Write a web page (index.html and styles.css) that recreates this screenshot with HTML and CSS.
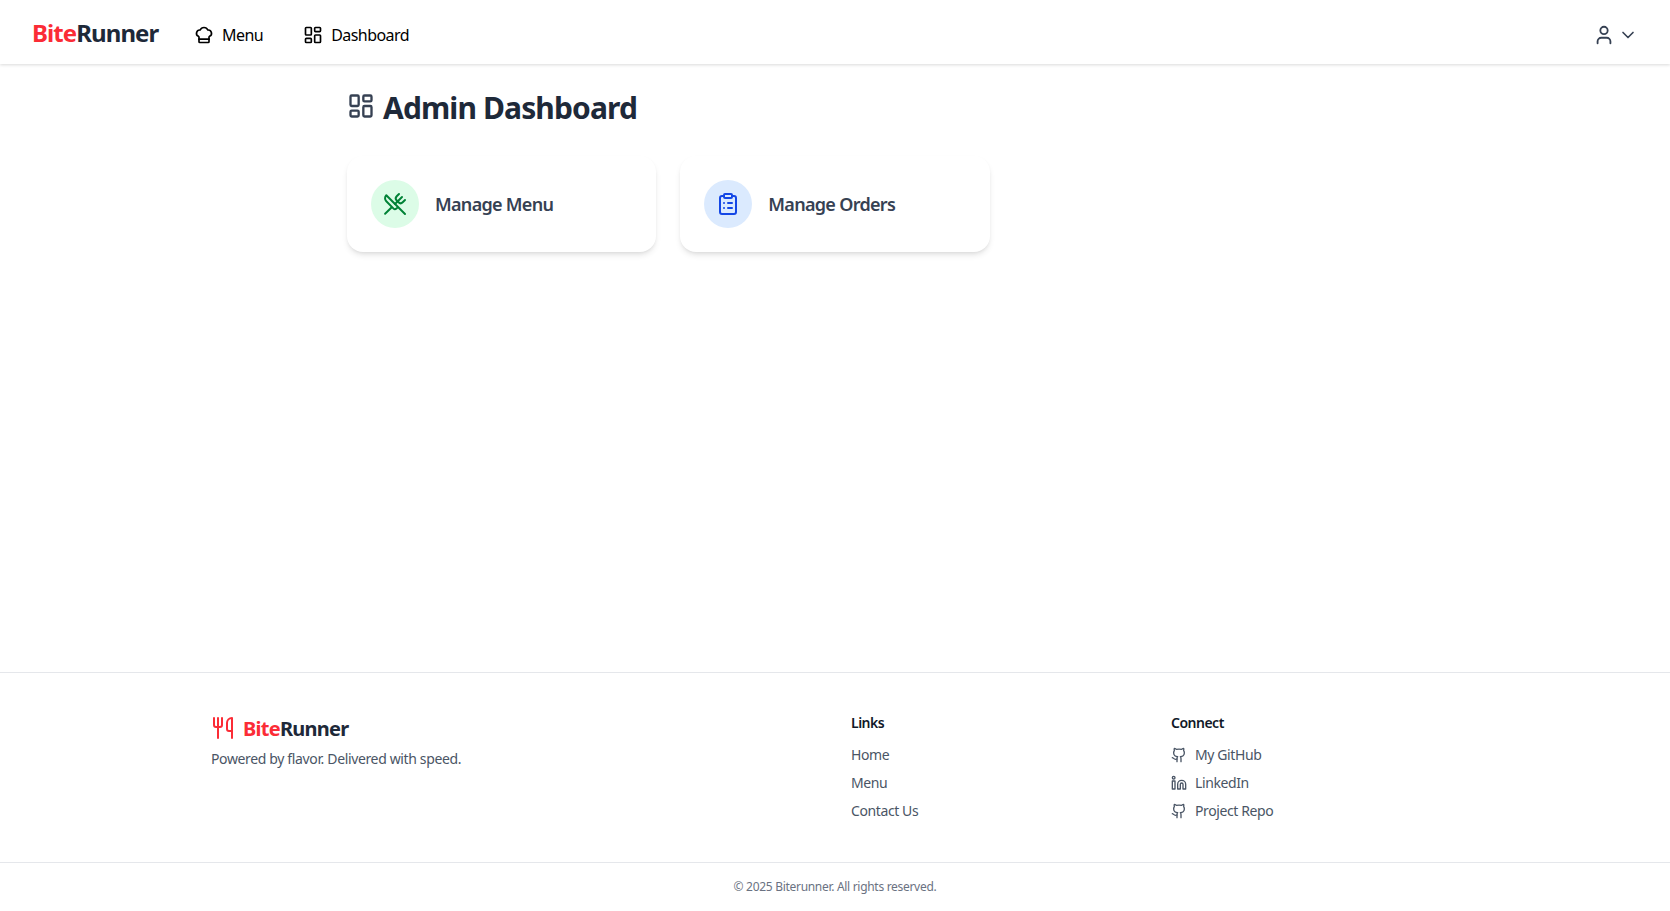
FILE: index.html
```html
<!DOCTYPE html>
<html lang="en">
<head>
    <meta charset="UTF-8">
    <meta name="viewport" content="width=device-width, initial-scale=1.0">
    <title>BiteRunner Admin Dashboard</title>
    <link rel="stylesheet" href="styles.css">
</head>
<body>
    <header class="navbar">
        <div class="nav-left">
            <a class="brand" href="#"><span class="red">Bite</span>Runner</a>
            <a class="nav-link" href="#">
                <svg class="icon nav-icon" viewBox="0 0 24 24"><path d="M17 21a1 1 0 0 0 1-1v-5.35c0-.457.316-.844.727-1.041a4 4 0 0 0-2.134-7.589 5 5 0 0 0-9.186 0 4 4 0 0 0-2.134 7.588c.411.198.727.585.727 1.041V20a1 1 0 0 0 1 1Z"/><path d="M6 17h12"/></svg>
                Menu
            </a>
            <a class="nav-link" href="#">
                <svg class="icon nav-icon" viewBox="0 0 24 24"><rect x="3" y="3" width="7" height="9" rx="1"/><rect x="14" y="3" width="7" height="5" rx="1"/><rect x="14" y="12" width="7" height="9" rx="1"/><rect x="3" y="16" width="7" height="5" rx="1"/></svg>
                Dashboard
            </a>
        </div>
        <div class="user-menu">
            <svg class="icon user-icon" viewBox="0 0 24 24"><path d="M19 21v-2a4 4 0 0 0-4-4H9a4 4 0 0 0-4 4v2"/><circle cx="12" cy="7" r="4"/></svg>
            <svg class="icon chevron" viewBox="0 0 24 24"><path d="m6 9 6 6 6-6"/></svg>
        </div>
    </header>

    <main class="content">
        <h1 class="page-title">
            <svg class="icon title-icon" viewBox="0 0 24 24"><rect x="3" y="3" width="7" height="9" rx="1"/><rect x="14" y="3" width="7" height="5" rx="1"/><rect x="14" y="12" width="7" height="9" rx="1"/><rect x="3" y="16" width="7" height="5" rx="1"/></svg>
            <span class="title-text">Admin Dashboard</span>
        </h1>
        <div class="cards">
            <a class="card" href="#">
                <span class="card-icon green">
                    <svg class="icon" viewBox="0 0 24 24"><path d="m16 2-2.3 2.3a3 3 0 0 0 0 4.2l1.8 1.8a3 3 0 0 0 4.2 0L22 8"/><path d="M15 15 3.3 3.3a4.2 4.2 0 0 0 0 6l7.3 7.3c.7.7 2 .7 2.8 0L15 15Zm0 0 7 7"/><path d="m2.1 21.8 6.4-6.3"/><path d="m19 5-7 7"/></svg>
                </span>
                Manage Menu
            </a>
            <a class="card" href="#">
                <span class="card-icon blue">
                    <svg class="icon" viewBox="0 0 24 24"><rect x="8" y="2" width="8" height="4" rx="1"/><path d="M16 4h2a2 2 0 0 1 2 2v14a2 2 0 0 1-2 2H6a2 2 0 0 1-2-2V6a2 2 0 0 1 2-2h2"/><path d="M12 11h4"/><path d="M12 16h4"/><path d="M8 11h.01"/><path d="M8 16h.01"/></svg>
                </span>
                Manage Orders
            </a>
        </div>
    </main>

    <footer class="footer">
        <div class="footer-grid">
            <div class="footer-about">
                <div class="footer-brand">
                    <svg class="icon footer-logo" viewBox="0 0 24 24"><path d="M3 2v7c0 1.1.9 2 2 2h4a2 2 0 0 0 2-2V2"/><path d="M7 2v20"/><path d="M21 15V2a5 5 0 0 0-5 5v6c0 1.1.9 2 2 2h3Zm0 0v7"/></svg>
                    <span class="footer-name"><span class="red">Bite</span>Runner</span>
                </div>
                <p class="tagline">Powered by flavor. Delivered with speed.</p>
            </div>
            <div>
                <h3 class="footer-heading">Links</h3>
                <ul class="footer-list">
                    <li><a href="#">Home</a></li>
                    <li><a href="#">Menu</a></li>
                    <li><a href="#">Contact Us</a></li>
                </ul>
            </div>
            <div>
                <h3 class="footer-heading">Connect</h3>
                <ul class="footer-list">
                    <li><a href="#"><svg class="icon social" viewBox="0 0 24 24"><path d="M15 22v-4a4.8 4.8 0 0 0-1-3.5c3 0 6-2 6-5.5.08-1.25-.27-2.48-1-3.5.28-1.15.28-2.35 0-3.5 0 0-1 0-3 1.5-2.64-.5-5.36-.5-8 0C6 2 5 2 5 2c-.3 1.15-.3 2.35 0 3.5A5.403 5.403 0 0 0 4 9c0 3.5 3 5.5 6 5.5-.39.49-.68 1.05-.85 1.65-.17.6-.22 1.23-.15 1.85v4"/><path d="M9 18c-4.51 2-5-2-7-2"/></svg>My GitHub</a></li>
                    <li><a href="#"><svg class="icon social" viewBox="0 0 24 24"><path d="M16 8a6 6 0 0 1 6 6v7h-4v-7a2 2 0 0 0-2-2 2 2 0 0 0-2 2v7h-4v-7a6 6 0 0 1 6-6z"/><rect x="2" y="9" width="4" height="12"/><circle cx="4" cy="4" r="2"/></svg>LinkedIn</a></li>
                    <li><a href="#"><svg class="icon social" viewBox="0 0 24 24"><path d="M15 22v-4a4.8 4.8 0 0 0-1-3.5c3 0 6-2 6-5.5.08-1.25-.27-2.48-1-3.5.28-1.15.28-2.35 0-3.5 0 0-1 0-3 1.5-2.64-.5-5.36-.5-8 0C6 2 5 2 5 2c-.3 1.15-.3 2.35 0 3.5A5.403 5.403 0 0 0 4 9c0 3.5 3 5.5 6 5.5-.39.49-.68 1.05-.85 1.65-.17.6-.22 1.23-.15 1.85v4"/><path d="M9 18c-4.51 2-5-2-7-2"/></svg>Project Repo</a></li>
                </ul>
            </div>
        </div>
        <div class="copyright">© 2025 Biterunner. All rights reserved.</div>
    </footer>
</body>
</html>
```
FILE: styles.css
```css
* {
    box-sizing: border-box;
}
html, body {
    margin: 0;
    height: 100%;
}
body {
    display: flex;
    flex-direction: column;
    min-height: 911px;
    background-color: #fff;
    color: #1e2939;
    font-family: "Noto Sans", "Open Sans", Arial, sans-serif;
}
a {
    color: inherit;
    text-decoration: none;
}
.icon {
    display: block;
    flex: none;
    width: 24px;
    height: 24px;
    fill: none;
    stroke: currentColor;
    stroke-width: 2;
    stroke-linecap: round;
    stroke-linejoin: round;
}
.red {
    color: #fb2c36;
}

/* top bar */
.navbar {
    display: flex;
    align-items: center;
    justify-content: space-between;
    height: 64px;
    padding: 0 32px;
    background: #fff;
    box-shadow: 0 1px 3px rgba(0, 0, 0, 0.15);
}
.nav-left {
    display: flex;
    align-items: center;
}
.brand {
    width: 146px;
    font-size: 24px;
    font-weight: 700;
    letter-spacing: -0.92px;
    white-space: nowrap;
}
.nav-link {
    display: flex;
    align-items: center;
    gap: 8px;
    padding: 14px 16px 8px;
    margin-right: 8px;
    color: #000;
    font-size: 16px;
    letter-spacing: -0.55px;
}
.nav-icon {
    width: 20px;
    height: 20px;
}
.user-menu {
    display: flex;
    align-items: center;
    gap: 3px;
    margin-top: 6px;
    color: #364153;
}
.user-icon {
    width: 22px;
    height: 22px;
}
.chevron {
    width: 20px;
    height: 20px;
}

/* main */
.content {
    flex: 1;
    width: 1024px;
    margin: 0 auto;
    padding: 26px 24px 24px;
}
.page-title {
    display: flex;
    align-items: center;
    gap: 8px;
    margin: 0 0 30px;
    font-size: 30px;
    line-height: 36px;
    font-weight: 700;
}
.title-text {
    letter-spacing: -0.88px;
}
.title-icon {
    width: 28px;
    height: 28px;
    margin-top: -5px;
    color: #364153;
}
.cards {
    display: grid;
    grid-template-columns: repeat(3, 1fr);
    gap: 24px;
}
.card {
    display: flex;
    align-items: center;
    gap: 16px;
    padding: 24px;
    border-radius: 16px;
    background: #fff;
    color: #364153;
    font-size: 18px;
    font-weight: 600;
    letter-spacing: -0.7px;
    box-shadow: 0 4px 6px -1px rgba(0, 0, 0, 0.1), 0 2px 4px -2px rgba(0, 0, 0, 0.1);
}
.card-icon {
    display: flex;
    align-items: center;
    justify-content: center;
    width: 48px;
    height: 48px;
    border-radius: 50%;
}
.green {
    background: #dcfce7;
    color: #008236;
}
.blue {
    background: #dbeafe;
    color: #1447e6;
}

/* footer */
.footer {
    border-top: 1px solid #e5e7eb;
}
.footer-grid {
    display: grid;
    grid-template-columns: repeat(4, 1fr);
    gap: 32px;
    width: 1280px;
    margin: 0 auto;
    padding: 40px 16px 41px;
}
.footer-about {
    grid-column: span 2;
}
.footer-brand {
    display: flex;
    align-items: center;
    gap: 8px;
    font-size: 20px;
    line-height: 28px;
    font-weight: 700;
}
.footer-name {
    margin-top: 2px;
    letter-spacing: -0.74px;
}
.footer-logo {
    color: #fb2c36;
}
.tagline {
    margin: 6px 0 0;
    color: #4a5565;
    font-size: 14px;
    line-height: 20px;
    letter-spacing: -0.36px;
}
.footer-heading {
    margin: 0 0 12px;
    color: #101828;
    font-size: 14px;
    line-height: 20px;
    font-weight: 600;
    letter-spacing: -0.5px;
}
.footer-list {
    display: flex;
    flex-direction: column;
    gap: 8px;
    margin: 0;
    padding: 0;
    list-style: none;
    color: #4a5565;
    font-size: 14px;
    line-height: 20px;
    letter-spacing: -0.4px;
}
.footer-list a {
    display: flex;
    align-items: center;
    gap: 8px;
}
.social {
    width: 16px;
    height: 16px;
}
.copyright {
    padding: 16px;
    border-top: 1px solid #e5e7eb;
    color: #6a7282;
    font-size: 12px;
    line-height: 16px;
    text-align: center;
    letter-spacing: -0.3px;
}
```
